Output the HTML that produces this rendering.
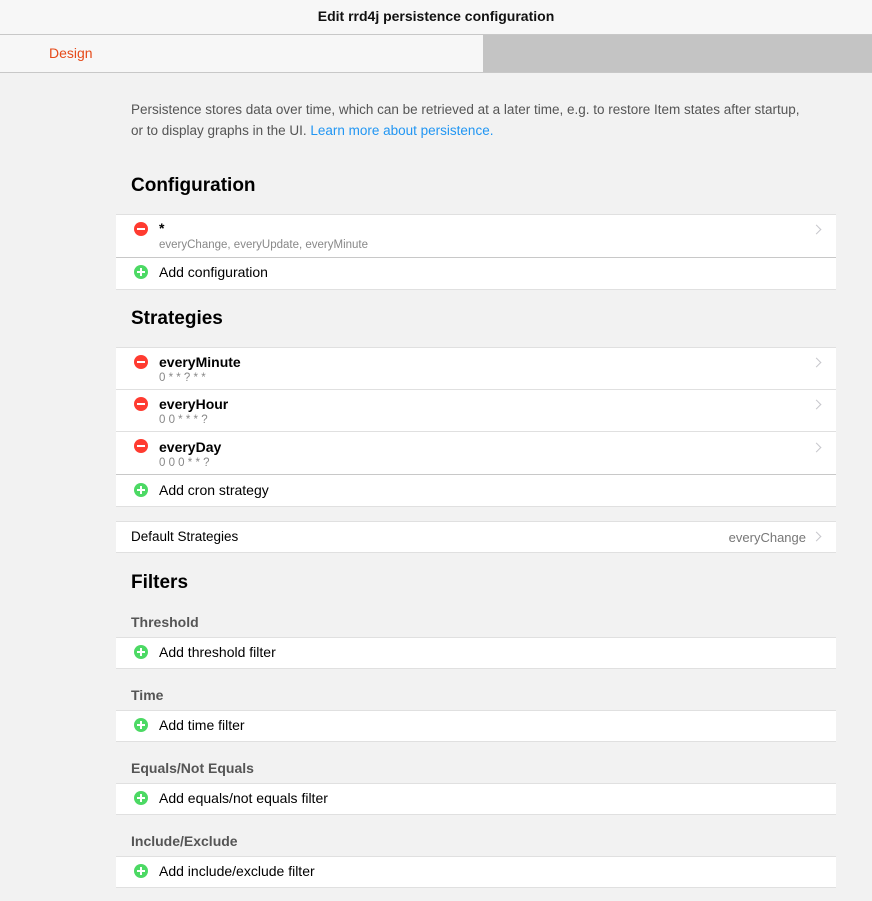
<!DOCTYPE html>
<html><head><meta charset="utf-8"><style>
*{margin:0;padding:0;box-sizing:border-box}
body{width:872px;height:901px;background:#f2f2f2;font-family:"Liberation Sans",sans-serif;position:relative;overflow:hidden;color:#000}
.a{position:absolute}
.hdr{left:0;top:0;width:872px;height:35px;background:#f7f7f7;border-bottom:1px solid #c8c8c8;text-align:center;font-size:14px;font-weight:bold;line-height:33px;color:#111}
.tabs{left:0;top:35px;width:872px;height:38px;background:#c4c4c4;border-bottom:1px solid #c8c8c8}
.tab{left:0;top:0;width:483px;height:37px;background:#f7f7f7;color:#e64a19;font-size:14px;line-height:37px;padding-left:49px}
.intro{left:131px;top:99px;width:688px;font-size:13.5px;line-height:21px;color:#555}
.intro span{color:#2196f3}
h2{position:absolute;left:131px;font-size:19px;font-weight:bold;color:#000}
h3{position:absolute;left:131px;font-size:14px;font-weight:bold;color:#555}
.card{position:absolute;left:116px;width:720px;background:#fff;border-top:1px solid #e0e0e0;border-bottom:1px solid #e0e0e0}
.row{position:relative;border-bottom:1px solid #e0e0e0}
.row:last-child{border-bottom:none}
.row.sep{border-bottom:1px solid #c8c8c8}
.ic{position:absolute;left:18px;width:14px;height:14px;border-radius:50%}
.ic::after{content:"";position:absolute;left:3px;top:6px;width:8px;height:2px;background:#fff}
.red{background:#ff3b30}
.grn{background:#4cd964}
.grn::before{content:"";position:absolute;left:6px;top:3px;width:2px;height:8px;background:#fff}
.t{position:absolute;left:43px;font-size:14px}
.b{font-weight:bold}
.s{position:absolute;left:43px;font-size:11.5px;color:#888}
.ch{position:absolute;right:16px;width:7px;height:7px;border-top:1.3px solid #c7c7cc;border-right:1.3px solid #c7c7cc;transform:rotate(45deg)}
</style></head><body>
<div class="a hdr">Edit rrd4j persistence configuration</div>
<div class="a tabs"><div class="a tab">Design</div></div>
<div class="a intro">Persistence stores data over time, which can be retrieved at a later time, e.g. to restore Item states after startup,<br>or to display graphs in the UI. <span>Learn more about persistence.</span></div>

<h2 style="top:175px">Configuration</h2>
<div class="card" style="top:214px">
 <div class="row sep" style="height:43px"><div class="ic red" style="top:7px"></div><div class="t b" style="top:5px">*</div><div class="s" style="top:24px">everyChange, everyUpdate, everyMinute</div><div class="ch" style="top:11px"></div></div>
 <div class="row" style="height:31px"><div class="ic grn" style="top:7px"></div><div class="t" style="top:6px">Add configuration</div></div>
</div>

<h2 style="top:308px">Strategies</h2>
<div class="card" style="top:347px">
 <div class="row" style="height:42px"><div class="ic red" style="top:7px"></div><div class="t b" style="top:6px">everyMinute</div><div class="s" style="top:24px">0 * * ? * *</div><div class="ch" style="top:11px"></div></div>
 <div class="row" style="height:42px"><div class="ic red" style="top:7px"></div><div class="t b" style="top:6px">everyHour</div><div class="s" style="top:24px">0 0 * * * ?</div><div class="ch" style="top:11px"></div></div>
 <div class="row sep" style="height:43px"><div class="ic red" style="top:7px"></div><div class="t b" style="top:7px">everyDay</div><div class="s" style="top:25px">0 0 0 * * ?</div><div class="ch" style="top:12px"></div></div>
 <div class="row" style="height:31px"><div class="ic grn" style="top:8px"></div><div class="t" style="top:7px">Add cron strategy</div></div>
</div>

<div class="card" style="top:521px;height:32px"><div class="t" style="left:15px;top:7px;font-size:13.5px">Default Strategies</div><div class="a" style="right:30px;top:8px;font-size:13px;color:#777">everyChange</div><div class="ch" style="top:11px"></div></div>

<h2 style="top:572px">Filters</h2>
<h3 style="top:614px">Threshold</h3>
<div class="card" style="top:637px;height:32px"><div class="ic grn" style="top:7px"></div><div class="t" style="top:6px">Add threshold filter</div></div>
<h3 style="top:687px">Time</h3>
<div class="card" style="top:710px;height:32px"><div class="ic grn" style="top:7px"></div><div class="t" style="top:6px">Add time filter</div></div>
<h3 style="top:760px">Equals/Not Equals</h3>
<div class="card" style="top:783px;height:32px"><div class="ic grn" style="top:7px"></div><div class="t" style="top:6px">Add equals/not equals filter</div></div>
<h3 style="top:833px">Include/Exclude</h3>
<div class="card" style="top:856px;height:32px"><div class="ic grn" style="top:7px"></div><div class="t" style="top:6px">Add include/exclude filter</div></div>
</body></html>
